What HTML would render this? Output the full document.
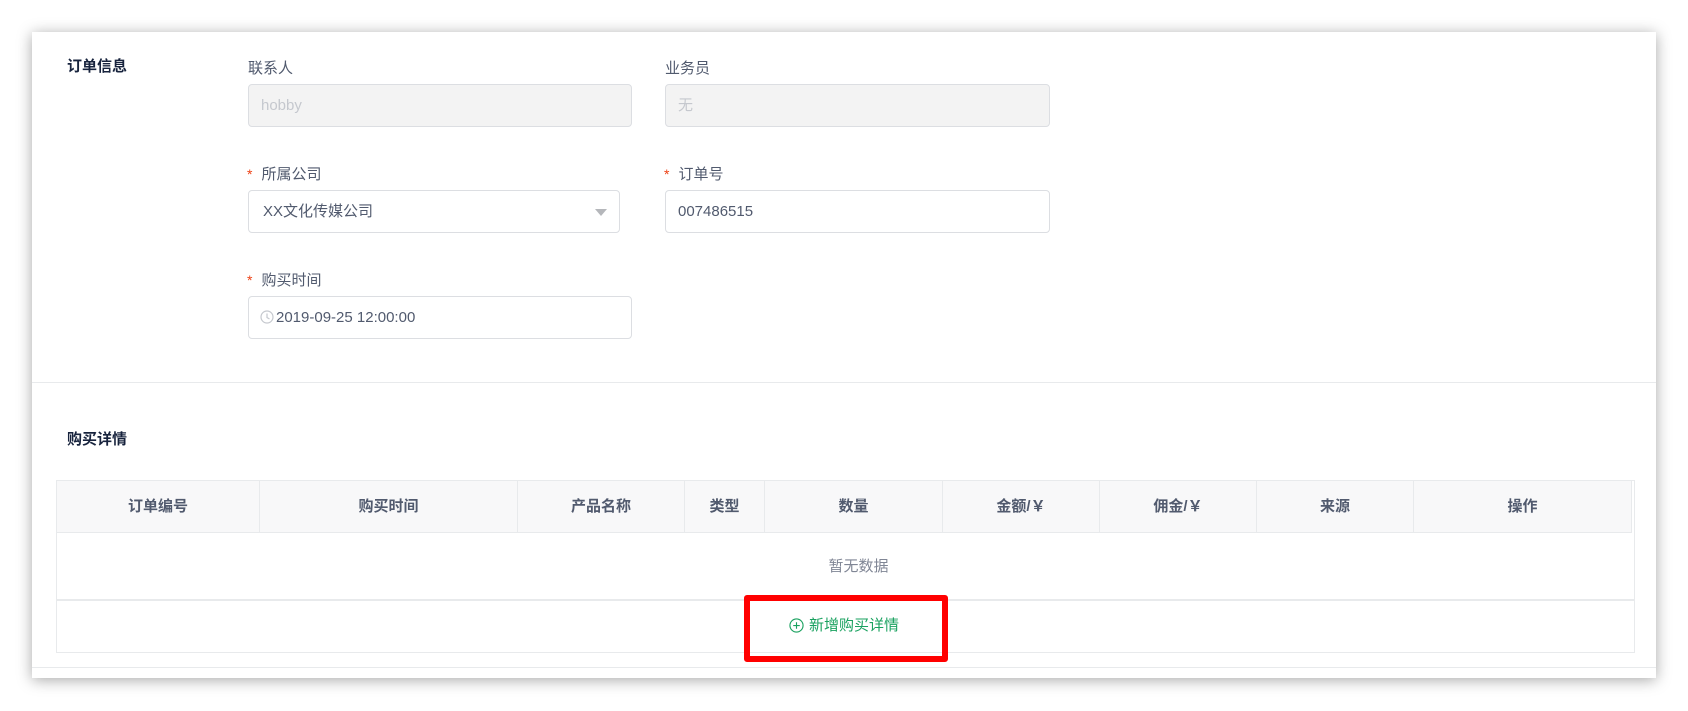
<!DOCTYPE html>
<html><head><meta charset="utf-8"><style>
*{box-sizing:border-box;margin:0;padding:0}
body{width:1688px;height:711px;background:#fff;font-family:"Liberation Sans","Noto Sans CJK SC",sans-serif;position:relative;overflow:hidden;color:#515a6e;font-size:15px}
.card{position:absolute;left:32px;top:32px;width:1624px;height:646px;background:#fff;box-shadow:0 2px 14px rgba(0,0,0,.35)}
.a{position:absolute}
.title{font-weight:bold;color:#17233d;font-size:15px}
.lbl{font-size:15px;color:#515a6e}
.star{color:#ed4014;margin-right:9px;font-size:14px}
.inp{position:absolute;height:43px;border:1px solid #dcdee2;border-radius:4px;padding:0 12px;line-height:41px;font-size:15px;color:#515a6e;background:#fff}
.dis{background:#f3f3f3;color:#c5c8ce}
.tbl{position:absolute;left:56px;top:480px;width:1579px;height:173px;border:1px solid #e8eaec}
.th{position:absolute;top:0;height:52px;line-height:52px;text-align:center;font-weight:bold;background:#f8f8f9;border-right:1px solid #e8eaec;border-bottom:1px solid #e8eaec;color:#515a6e}
</style></head><body>
<div class="card"></div>
<div class="a title" style="left:67px;top:55px">订单信息</div>
<div class="a lbl" style="left:248px;top:57px">联系人</div>
<div class="inp dis" style="left:248px;top:84px;width:384px">hobby</div>
<div class="a lbl" style="left:665px;top:57px">业务员</div>
<div class="inp dis" style="left:665px;top:84px;width:385px">无</div>
<div class="a lbl" style="left:247px;top:163px"><span class="star">*</span>所属公司</div>
<div class="inp" style="left:248px;top:190px;width:372px;padding-left:14px">XX文化传媒公司<span style="position:absolute;right:12px;top:18px;width:0;height:0;border-left:6px solid transparent;border-right:6px solid transparent;border-top:7px solid #b5b7bb"></span></div>
<div class="a lbl" style="left:664px;top:163px"><span class="star">*</span>订单号</div>
<div class="inp" style="left:665px;top:190px;width:385px">007486515</div>
<div class="a lbl" style="left:247px;top:269px"><span class="star">*</span>购买时间</div>
<div class="inp" style="left:248px;top:296px;width:384px;padding-left:11px"><svg width="14" height="14" viewBox="0 0 14 14" style="vertical-align:-2px;margin-right:2px"><circle cx="7" cy="7" r="6" fill="none" stroke="#c5c8ce" stroke-width="1.2"/><path d="M7 3.5V7.5L9.5 9" fill="none" stroke="#c5c8ce" stroke-width="1.2"/></svg>2019-09-25 12:00:00</div>
<div class="a" style="left:32px;top:382px;width:1624px;height:1px;background:#e8eaec"></div>
<div class="a title" style="left:67px;top:428px">购买详情</div>
<div class="tbl">
<div class="th" style="left:0;width:203px">订单编号</div>
<div class="th" style="left:203px;width:258px">购买时间</div>
<div class="th" style="left:461px;width:167px">产品名称</div>
<div class="th" style="left:628px;width:80px">类型</div>
<div class="th" style="left:708px;width:178px">数量</div>
<div class="th" style="left:886px;width:157px">金额/￥</div>
<div class="th" style="left:1043px;width:157px">佣金/￥</div>
<div class="th" style="left:1200px;width:157px">来源</div>
<div class="th" style="left:1357px;width:218px">操作</div>
<div class="a" style="left:0;top:52px;width:1577px;height:67px;line-height:67px;text-align:center;color:#808695;padding-left:26px">暂无数据</div>
<div class="a" style="left:0;top:118px;width:1577px;height:2px;background:#e8eaec"></div>
</div>
<div class="a" style="left:32px;top:667px;width:1624px;height:1px;background:#e8eaec"></div>
<div class="a" style="left:744px;top:595px;width:204px;height:67px;border:6px solid #ff0000;border-radius:3px"></div>
<div class="a" style="left:789px;top:617px;color:#19a15f;font-size:15px;line-height:18px"><svg width="15" height="15" viewBox="0 0 16 16" style="vertical-align:-3px;margin-right:5px"><circle cx="8" cy="8" r="7" fill="none" stroke="#19a15f" stroke-width="1.2"/><path d="M8 4.5v7M4.5 8h7" stroke="#19a15f" stroke-width="1.2"/></svg>新增购买详情</div>
</body></html>
